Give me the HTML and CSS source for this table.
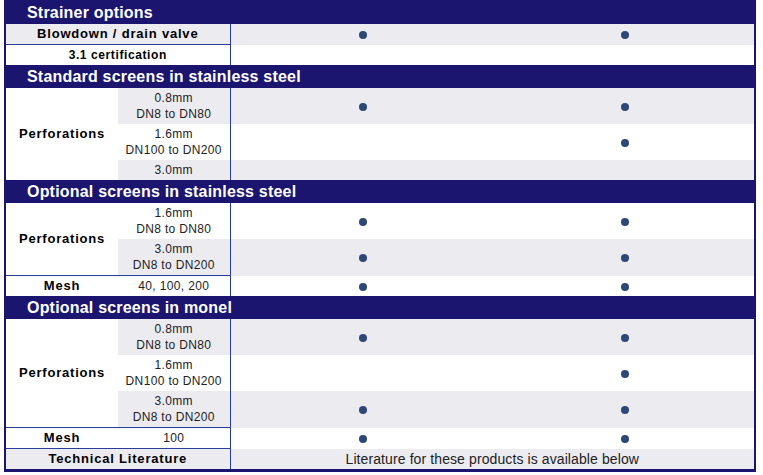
FILE: index.html
```html
<!DOCTYPE html>
<html lang="en">
<head>
<meta charset="utf-8">
<title>Strainer options</title>
<link rel="stylesheet" href="styles.css">
</head>
<body>
<table class="spec">
  <colgroup>
    <col class="c-label">
    <col class="c-sub">
    <col class="c-data">
    <col class="c-data2">
  </colgroup>
  <tbody>
    <tr class="sec"><th colspan="4">Strainer options</th></tr>
    <tr class="alt">
      <td colspan="2" class="lbl rule">Blowdown / drain valve</td>
      <td class="d1"><span class="dot"></span></td>
      <td><span class="dot"></span></td>
    </tr>
    <tr>
      <td colspan="2" class="lbl sm">3.1 certification</td>
      <td class="d1"></td>
      <td></td>
    </tr>

    <tr class="sec"><th colspan="4">Standard screens in stainless steel</th></tr>
    <tr class="alt">
      <td rowspan="3" class="lbl grp">Perforations</td>
      <td class="val">0.8mm<br>DN8 to DN80</td>
      <td class="d1"><span class="dot"></span></td>
      <td><span class="dot"></span></td>
    </tr>
    <tr>
      <td class="val">1.6mm<br>DN100 to DN200</td>
      <td class="d1"></td>
      <td><span class="dot"></span></td>
    </tr>
    <tr class="alt">
      <td class="val">3.0mm</td>
      <td class="d1"></td>
      <td></td>
    </tr>

    <tr class="sec"><th colspan="4">Optional screens in stainless steel</th></tr>
    <tr>
      <td rowspan="2" class="lbl grp rule">Perforations</td>
      <td class="val">1.6mm<br>DN8 to DN80</td>
      <td class="d1"><span class="dot"></span></td>
      <td><span class="dot"></span></td>
    </tr>
    <tr class="alt">
      <td class="val rule">3.0mm<br>DN8 to DN200</td>
      <td class="d1"><span class="dot"></span></td>
      <td><span class="dot"></span></td>
    </tr>
    <tr>
      <td class="lbl">Mesh</td>
      <td class="val">40, 100, 200</td>
      <td class="d1"><span class="dot"></span></td>
      <td><span class="dot"></span></td>
    </tr>

    <tr class="sec"><th colspan="4">Optional screens in monel</th></tr>
    <tr class="alt">
      <td rowspan="3" class="lbl grp rule">Perforations</td>
      <td class="val">0.8mm<br>DN8 to DN80</td>
      <td class="d1"><span class="dot"></span></td>
      <td><span class="dot"></span></td>
    </tr>
    <tr>
      <td class="val">1.6mm<br>DN100 to DN200</td>
      <td class="d1"></td>
      <td><span class="dot"></span></td>
    </tr>
    <tr class="alt">
      <td class="val rule">3.0mm<br>DN8 to DN200</td>
      <td class="d1"><span class="dot"></span></td>
      <td><span class="dot"></span></td>
    </tr>
    <tr>
      <td class="lbl rule">Mesh</td>
      <td class="val rule">100</td>
      <td class="d1"><span class="dot"></span></td>
      <td><span class="dot"></span></td>
    </tr>
    <tr class="alt lit">
      <td colspan="2" class="lbl">Technical Literature</td>
      <td colspan="2" class="d1 note">Literature for these products is available below</td>
    </tr>
  </tbody>
</table>
</body>
</html>
```

FILE: styles.css
```css
body {
  margin: 0;
  background: #ffffff;
  font-family: "Liberation Sans", Arial, sans-serif;
}

.spec {
  border-collapse: collapse;
  table-layout: fixed;
  width: 752px;
  margin-left: 4px;
  border-top: 1px solid #1c1570;
  border-left: 2px solid #1c1570;
  border-right: 2px solid #1c1570;
  border-bottom: 3px solid #1c1570;
}

.c-label { width: 113px; }
.c-sub { width: 112px; }
.c-data { width: 265px; }
.c-data2 { width: 260px; }

.sec th {
  background: #1c1570;
  color: #ffffff;
  font-size: 16px;
  font-weight: bold;
  letter-spacing: 0.2px;
  text-align: left;
  line-height: 19px;
  padding: 2px 0 2px 21px;
}

td {
  padding: 2px 0;
  line-height: 16px;
  text-align: center;
  vertical-align: middle;
  background: #ffffff;
  color: #222222;
}

.alt td {
  background: #ecebf0;
}

.alt td.grp {
  background: #ffffff;
}

.lbl {
  font-size: 13px;
  font-weight: bold;
  letter-spacing: 0.8px;
  color: #000000;
}

.lbl.sm {
  font-size: 12px;
  letter-spacing: 0.6px;
}

.val {
  font-size: 12px;
  letter-spacing: 0.35px;
}

.d1 {
  border-left: 1px solid #2b3d9b;
}

.rule {
  border-bottom: 1px solid #2b3d9b;
}

.dot {
  display: inline-block;
  width: 8px;
  height: 8px;
  border-radius: 50%;
  background: #2d4776;
  vertical-align: middle;
}

.note {
  font-size: 14px;
  letter-spacing: 0.1px;
}

.lit td {
  padding: 2px 0 2px;
}
```
